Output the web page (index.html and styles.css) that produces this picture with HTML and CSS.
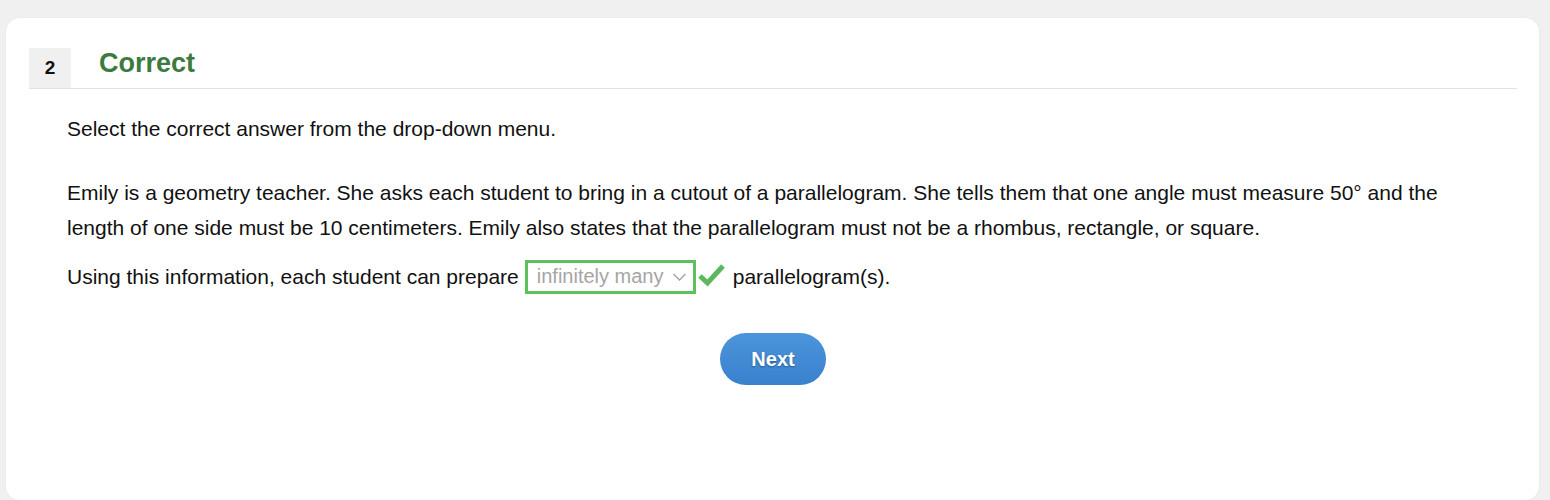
FILE: index.html
```html
<!DOCTYPE html>
<html>
<head>
<meta charset="utf-8">
<link rel="stylesheet" href="styles.css">
</head>
<body>
<div class="card">
  <div class="header">
    <div class="num">2</div>
    <h1 class="status">Correct</h1>
  </div>
  <div class="content">
    <p class="instr">Select the correct answer from the drop-down menu.</p>
    <p class="para">Emily is a geometry teacher. She asks each student to bring in a cutout of a parallelogram. She tells them that one angle must measure 50° and the length of one side must be 10 centimeters. Emily also states that the parallelogram must not be a rhombus, rectangle, or square.</p>
    <div class="answer"><span>Using this information, each student can prepare</span><span class="select"><span>infinitely many</span><svg class="chev" width="15" height="10" viewBox="0 0 15 10"><path d="M1.5 2 L7.5 8 L13.5 2" fill="none" stroke="#a3a3a3" stroke-width="1.4"/></svg></span><svg class="check" width="27" height="24" viewBox="0 0 27 24"><path d="M2 13 L9.5 20 L25 3" fill="none" stroke="#5cb85c" stroke-width="5"/></svg><span>parallelogram(s).</span></div>
    <div class="actions"><button class="next">Next</button></div>
  </div>
</div>
</body>
</html>
```
FILE: styles.css
```css
html, body {
  margin: 0;
  padding: 0;
  background: #f0f0f0;
  font-family: "Liberation Sans", Arial, sans-serif;
  color: #111;
}
body {
  padding: 18px 11px 0 6px;
}
.card {
  background: #fff;
  border-radius: 14px;
  box-shadow: 0 0 2px rgba(0,0,0,0.06);
  padding: 30px 22px 0 23px;
  height: 482px;
  box-sizing: border-box;
}
.header {
  display: flex;
  align-items: stretch;
  border-bottom: 1px solid #e2e2e2;
}
.num {
  width: 42px;
  height: 40px;
  background: #f0f0f0;
  font-weight: bold;
  font-size: 19px;
  display: flex;
  align-items: center;
  justify-content: center;
  box-sizing: border-box;
}
.status {
  margin: 0 0 0 28px;
  font-size: 27px;
  font-weight: bold;
  color: #3d7a40;
  line-height: 31px;
}
.content {
  padding: 0 38px;
}
.instr {
  font-size: 21px;
  margin: 28px 0 0;
  line-height: 24px;
}
.para {
  font-size: 21px;
  line-height: 35px;
  margin: 34px 0 0;
}
.answer {
  font-size: 21px;
  line-height: 35px;
  margin: 14px 0 0;
  display: flex;
  align-items: center;
}
.select {
  display: inline-flex;
  align-items: center;
  justify-content: space-between;
  border: 3px solid #5cc05c;
  color: #a5a5a5;
  font-size: 20px;
  height: 34px;
  box-sizing: border-box;
  padding: 0 6px 0 9px;
  width: 171px;
  margin-left: 6px;
}
.chev { margin-top: 1px; }
.check {
  margin: 0 8px 0 2px;
  position: relative;
  top: -2px;
}
.actions {
  display: flex;
  justify-content: center;
  margin-top: 39px;
}
.next {
  width: 106px;
  height: 52px;
  border-radius: 26px;
  border: none;
  background: linear-gradient(#4b95dc, #3a81cd);
  color: #fff;
  font-family: "Liberation Sans", Arial, sans-serif;
  font-weight: bold;
  font-size: 20px;
  text-shadow: 0 1px 2px rgba(0,0,0,0.35);
}
```
